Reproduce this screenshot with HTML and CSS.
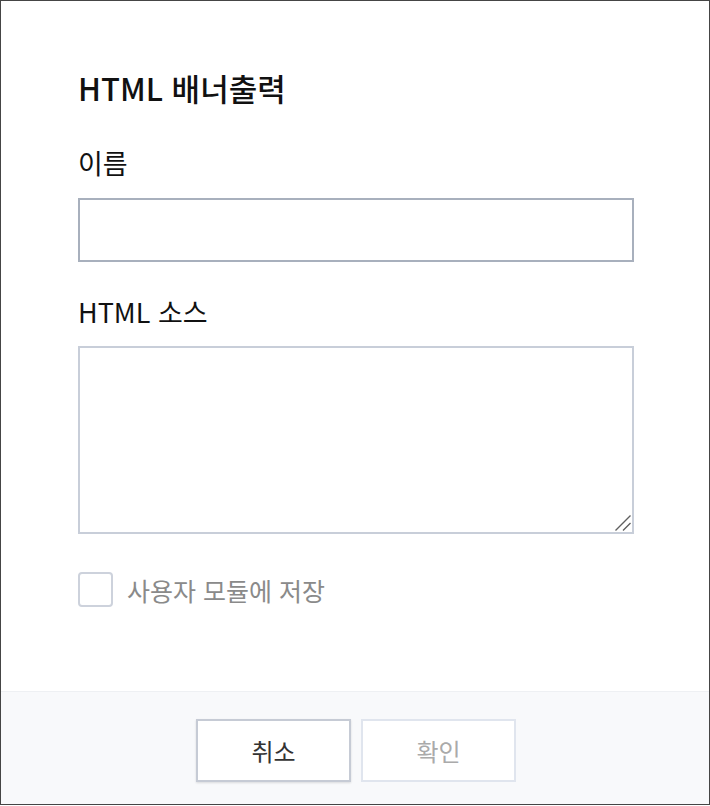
FILE: index.html
```html
<!DOCTYPE html>
<html lang="ko">
<head>
<meta charset="utf-8">
<title>HTML 배너출력</title>
<link rel="stylesheet" href="styles.css">
</head>
<body>
<div class="dialog">
  <div class="body">
    <h1 class="title">HTML 배너출력</h1>
    <label class="label label-name">이름</label>
    <input class="field" type="text">
    <label class="label label-src">HTML 소스</label>
    <div class="area-wrap">
      <textarea class="area"></textarea>
      <svg class="grip" width="16" height="16" viewBox="0 0 16 16" aria-hidden="true">
        <path d="M0.5 15.5 L15.5 0.5 M8 15.5 L15.5 8" stroke="#5f5f5f" stroke-width="1.4" fill="none"/>
      </svg>
    </div>
    <div class="check-row">
      <span class="checkbox"></span>
      <span class="check-text">사용자 모듈에 저장</span>
    </div>
  </div>
  <div class="footer">
    <button class="btn btn-cancel">취소</button>
    <button class="btn btn-ok">확인</button>
  </div>
</div>
</body>
</html>
```
FILE: styles.css
```css
html, body {
  margin: 0;
  padding: 0;
  background: #ffffff;
}
body {
  font-family: "Noto Sans CJK KR", "Noto Sans", sans-serif;
  color: #111;
}
.dialog {
  box-sizing: border-box;
  width: 710px;
  height: 805px;
  border: 1px solid #454545;
  display: flex;
  flex-direction: column;
  background: #fff;
}
.body {
  display: flex;
  flex-direction: column;
  padding: 67px 75px 0 77px;
}
.title {
  margin: 0;
  font-size: 31px;
  font-weight: 500;
  line-height: 40px;
  color: #111;
}
.label {
  display: block;
  font-size: 27px;
  line-height: 34px;
  color: #111;
}
.label-name {
  margin-top: 38px;
  margin-bottom: 18px;
}
.field {
  box-sizing: border-box;
  width: 556px;
  height: 64px;
  margin: 0;
  border: 2px solid #a8b0bd;
  border-radius: 0;
  outline: none;
  background: #fff;
  font-family: inherit;
}
.label-src {
  margin-top: 33px;
  margin-bottom: 17px;
}
.area-wrap {
  position: relative;
  width: 556px;
  height: 188px;
}
.area {
  box-sizing: border-box;
  width: 556px;
  height: 188px;
  margin: 0;
  border: 2px solid #c8ced9;
  border-radius: 0;
  outline: none;
  background: #fff;
  font-family: inherit;
  display: block;
  resize: none;
}
.grip {
  position: absolute;
  right: 3px;
  bottom: 3px;
}
.check-row {
  display: flex;
  align-items: center;
  gap: 14px;
  margin-top: 38px;
}
.checkbox {
  box-sizing: border-box;
  width: 35px;
  height: 35px;
  border: 2px solid #cdd2dc;
  border-radius: 4px;
  background: #fff;
}
.check-text {
  font-size: 25px;
  line-height: 34px;
  color: #8a8a8a;
}
.footer {
  margin-top: auto;
  height: 113px;
  box-sizing: border-box;
  border-top: 1px solid #eef0f3;
  background: #f8f9fb;
  display: flex;
  justify-content: center;
  align-items: flex-start;
  gap: 10px;
  padding: 27px 0 0 2px;
}
.btn {
  box-sizing: border-box;
  width: 155px;
  height: 63px;
  margin: 0;
  background: #fff;
  font-family: inherit;
  font-size: 24px;
  border-radius: 0;
  padding: 0;
}
.btn-cancel {
  border: 2px solid #c6cbd5;
  color: #333;
  box-shadow: 0 1px 2px rgba(0, 0, 0, 0.12);
}
.btn-ok {
  border: 2px solid #e0e5ee;
  color: #aaaaaa;
}
```
